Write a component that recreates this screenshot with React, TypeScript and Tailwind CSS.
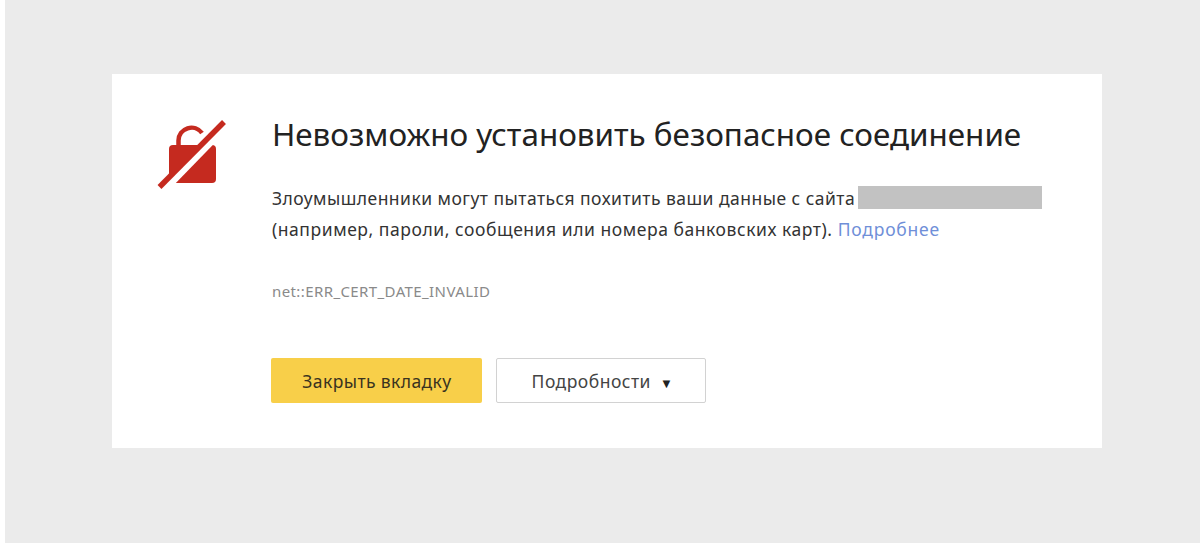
export default function App() {
  return (
    <div className="h-[543px] w-[1200px] overflow-hidden bg-white pl-[5px] font-['Noto_Sans',sans-serif]">
      <div className="flex h-full flex-col bg-[#ebebeb] pl-[107px] pr-[98px] pt-[74px]">
        <div className="flex h-[374px] bg-white pl-[40px]">
          <div className="w-[120px] shrink-0 pt-[42px]">
            <svg width="80" height="80" viewBox="0 0 80 80" fill="none">
              <path d="M26.5 30V24.5A13 13 0 0 1 50 17" stroke="#c52a1f" strokeWidth="4.5" />
              <rect x="17" y="29" width="47" height="38" rx="4" fill="#c52a1f" />
              <path d="M5 81L80 4" stroke="#ffffff" strokeWidth="7.5" />
              <path d="M7.5 71L72 6" stroke="#c52a1f" strokeWidth="5.5" />
            </svg>
          </div>
          <div className="flex flex-col">
            <h1 className="mt-[37px] text-[31.4px] leading-[46px] font-normal whitespace-nowrap text-[#222222]">
              Невозможно установить безопасное соединение
            </h1>
            <p className="mt-[26px] text-[17.5px] leading-[31px] tracking-[0.47px] whitespace-nowrap text-[#333333]">
              Злоумышленники могут пытаться похитить ваши данные с сайта
              <span className="mt-[3px] ml-[3px] inline-block h-[23px] w-[184px] bg-[#c2c2c2] align-top" />
            </p>
            <p className="text-[17.5px] leading-[31px] tracking-[0.55px] whitespace-nowrap text-[#333333]">
              (например, пароли, сообщения или номера банковских карт).{' '}
              <a className="tracking-[0.8px] text-[#6f8fd8]">Подробнее</a>
            </p>
            <p className="mt-[31px] text-[15px] leading-[31px] tracking-[0.4px] text-[#8a8a8a]">
              net::ERR_CERT_DATE_INVALID
            </p>
            <div className="mt-[51px] -ml-px flex gap-[14px]">
              <button className="h-[45px] w-[211px] rounded-[2px] bg-[#f8cf49] pt-[1px] pl-[1px] text-[17.5px] tracking-[0.4px] text-[#3a3320]">
                Закрыть вкладку
              </button>
              <button className="h-[45px] w-[210px] rounded-[2px] border border-[#d2d2d2] bg-white pt-[1px] pl-[3px] text-[17.5px] tracking-[0.5px] text-[#444444]">
                Подробности <span className="ml-[4px] text-[13px] text-[#222222]">▼</span>
              </button>
            </div>
          </div>
        </div>
      </div>
    </div>
  );
}
